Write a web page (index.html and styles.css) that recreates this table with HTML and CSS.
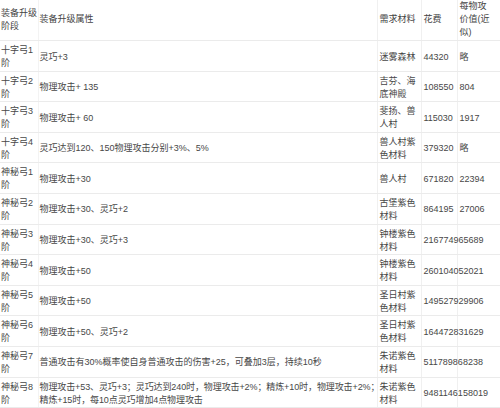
FILE: index.html
```html
<!DOCTYPE html>
<html lang="zh-CN">
<head>
<meta charset="utf-8">
<link rel="stylesheet" href="styles.css">
</head>
<body>
<table class="grid">
  <colgroup>
    <col class="c-stage">
    <col class="c-attr">
    <col class="c-mat">
    <col class="c-cost">
    <col class="c-val">
  </colgroup>
  <thead>
    <tr>
      <th class="stage">装备升级阶段</th>
      <th class="attr">装备升级属性</th>
      <th class="mat">需求材料</th>
      <th class="cost">花费</th>
      <th class="val">每物攻价值(近似)</th>
    </tr>
  </thead>
  <tbody>
    <tr><td class="stage">十字弓1阶</td><td class="attr">灵巧+3</td><td class="mat">迷雾森林</td><td class="cost">44320</td><td class="val">略</td></tr>
    <tr><td class="stage">十字弓2阶</td><td class="attr">物理攻击+ 135</td><td class="mat">吉芬、海底神殿</td><td class="cost">108550</td><td class="val">804</td></tr>
    <tr><td class="stage">十字弓3阶</td><td class="attr">物理攻击+ 60</td><td class="mat">斐扬、兽人村</td><td class="cost">115030</td><td class="val">1917</td></tr>
    <tr><td class="stage">十字弓4阶</td><td class="attr">灵巧达到120、150物理攻击分别+3%、5%</td><td class="mat">兽人村紫色材料</td><td class="cost">379320</td><td class="val">略</td></tr>
    <tr><td class="stage">神秘弓1阶</td><td class="attr">物理攻击+30</td><td class="mat">兽人村</td><td class="cost">671820</td><td class="val">22394</td></tr>
    <tr><td class="stage">神秘弓2阶</td><td class="attr">物理攻击+30、灵巧+2</td><td class="mat">古堡紫色材料</td><td class="cost">864195</td><td class="val">27006</td></tr>
    <tr><td class="stage">神秘弓3阶</td><td class="attr">物理攻击+30、灵巧+3</td><td class="mat">钟楼紫色材料</td><td class="cost long">216774965689</td><td class="val"></td></tr>
    <tr><td class="stage">神秘弓4阶</td><td class="attr">物理攻击+50</td><td class="mat">钟楼紫色材料</td><td class="cost long">260104052021</td><td class="val"></td></tr>
    <tr><td class="stage">神秘弓5阶</td><td class="attr">物理攻击+50</td><td class="mat">圣日村紫色材料</td><td class="cost long">149527929906</td><td class="val"></td></tr>
    <tr><td class="stage">神秘弓6阶</td><td class="attr">物理攻击+50、灵巧+2</td><td class="mat">圣日村紫色材料</td><td class="cost long">164472831629</td><td class="val"></td></tr>
    <tr><td class="stage">神秘弓7阶</td><td class="attr">普通攻击有30%概率使自身普通攻击的伤害+25，可叠加3层，持续10秒</td><td class="mat">朱诺紫色材料</td><td class="cost long">511789868238</td><td class="val"></td></tr>
    <tr><td class="stage">神秘弓8阶</td><td class="attr lines">物理攻击+53、灵巧+3；灵巧达到240时，物理攻击+2%；精炼+10时，物理攻击+2%；<br>精炼+15时，每10点灵巧增加4点物理攻击</td><td class="mat">朱诺紫色材料</td><td class="cost long">9481146158019</td><td class="val"></td></tr>
  </tbody>
</table>
</body>
</html>
```

FILE: styles.css
```css
html, body {
  margin: 0;
  padding: 0;
  background: #ffffff;
}

body {
  font-family: "Liberation Sans", "Noto Sans CJK SC", sans-serif;
  font-size: 9px;
  line-height: 13px;
  color: #474747;
  overflow: hidden;
}

.grid {
  width: 500px;
  table-layout: fixed;
  border-collapse: collapse;
  border-spacing: 0;
}

.c-stage { width: 38px; }
.c-attr { width: 339px; }
.c-mat { width: 44px; }
.c-cost { width: 36px; }
.c-val { width: 43px; }

.grid th,
.grid td {
  text-align: left;
  vertical-align: middle;
  font-weight: normal;
  padding: 3px 0 0.6px 1px;
  border-bottom: 1px solid #ebebeb;
  word-break: break-all;
}

.grid th {
  padding-top: 0;
  padding-bottom: 1px;
  color: #444;
}

.grid .stage {
  border-right: 1px solid #f3f3f3;
}

.grid .attr {
  padding-left: 1px;
}

.grid .mat {
  padding-left: 2px;
  padding-right: 3px;
  border-left: 1px solid #f0f0f0;
}

.grid .cost {
  padding-left: 2px;
  border-left: 1px solid #f0f0f0;
}

.grid .long {
  white-space: nowrap;
  overflow: visible;
}

.grid .val {
  padding-left: 2px;
  padding-right: 8px;
  border-left: 1px solid #f0f0f0;
}

.grid .lines {
  white-space: nowrap;
  letter-spacing: -0.1px;
}
```
